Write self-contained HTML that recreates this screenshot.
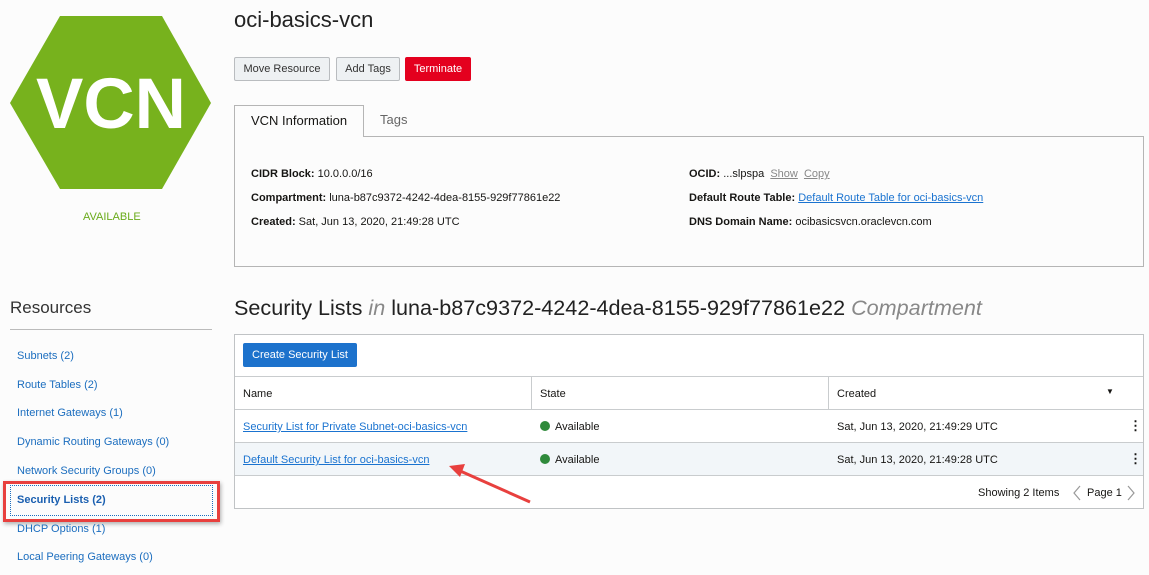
<!DOCTYPE html>
<html><head><style>
*{margin:0;padding:0;box-sizing:border-box}
body{width:1149px;height:575px;background:#fcfcfc;font-family:"Liberation Sans",sans-serif;color:#161513;position:relative;overflow:hidden}
.a{position:absolute}
.btn{position:absolute;top:57px;height:24px;border:1px solid #b9bcbf;background:#eef1f3;border-radius:2px;font-size:11px;line-height:23px;text-align:center;color:#333}
.d{position:absolute;font-size:11px;white-space:nowrap}
.d b{font-weight:bold}
.side{position:absolute;left:17px;font-size:11px;color:#1c6ebf}
.link{color:#1a73d0;text-decoration:underline}
.cell{position:absolute;font-size:11px;white-space:nowrap}
.hl{position:absolute;left:235px;width:908px;height:1px;background:#c9ccce}
.dot{display:inline-block;width:10px;height:10px;border-radius:50%;background:#2f8a3b;vertical-align:-1px;margin-right:5px}
</style></head><body>
<svg class="a" style="left:0;top:0" width="225" height="200">
<polygon points="10,103 60,16 162,16 211,103 162,189 60,189" fill="#77b21d"/>
<text x="111" y="128" text-anchor="middle" font-family="Liberation Sans" font-weight="bold" font-size="71" fill="#fff">VCN</text>
</svg>
<div class="a" style="left:83px;top:211px;font-size:11px;color:#6aab1a">AVAILABLE</div>
<div class="a" style="left:234px;top:7px;font-size:22px;color:#222">oci-basics-vcn</div>
<div class="btn" style="left:234px;width:96px">Move Resource</div>
<div class="btn" style="left:336px;width:64px">Add Tags</div>
<div class="btn" style="left:405px;width:66px;background:#e4001e;border-color:#e4001e;color:#fff">Terminate</div>
<div class="a" style="left:234px;top:136px;width:910px;height:131px;border:1px solid #b5b5b5;background:#fcfcfc"></div>
<div class="a" style="left:234px;top:105px;width:130px;height:32px;border:1px solid #b5b5b5;border-bottom:none;background:#fcfcfc;font-size:13px;line-height:30px;text-align:center">VCN Information</div>
<div class="a" style="left:380px;top:112px;font-size:13px;color:#666">Tags</div>
<div class="d" style="left:251px;top:168px"><b>CIDR Block:</b> 10.0.0.0/16</div>
<div class="d" style="left:251px;top:192px"><b>Compartment:</b> luna-b87c9372-4242-4dea-8155-929f77861e22</div>
<div class="d" style="left:251px;top:216px"><b>Created:</b> Sat, Jun 13, 2020, 21:49:28 UTC</div>
<div class="d" style="left:689px;top:168px"><b>OCID:</b> ...slpspa &nbsp;<span style="color:#888;text-decoration:underline">Show</span> &nbsp;<span style="color:#888;text-decoration:underline">Copy</span></div>
<div class="d" style="left:689px;top:192px"><b>Default Route Table:</b> <span class="link">Default Route Table for oci-basics-vcn</span></div>
<div class="d" style="left:689px;top:216px"><b>DNS Domain Name:</b> ocibasicsvcn.oraclevcn.com</div>
<div class="a" style="left:234px;top:295px;font-size:21.6px;white-space:nowrap;color:#222">Security Lists <i style="color:#888">in</i> luna-b87c9372-4242-4dea-8155-929f77861e22 <i style="color:#888">Compartment</i></div>
<div class="a" style="left:10px;top:298px;font-size:17px;color:#333">Resources</div>
<div class="a" style="left:10px;top:329px;width:202px;height:1px;background:#bbb"></div>
<div class="side" style="top:350px">Subnets (2)</div>
<div class="side" style="top:379px">Route Tables (2)</div>
<div class="side" style="top:407px">Internet Gateways (1)</div>
<div class="side" style="top:436px">Dynamic Routing Gateways (0)</div>
<div class="side" style="top:465px">Network Security Groups (0)</div>
<div class="a" style="left:3px;top:481px;width:217px;height:41px;border:3px solid #e8403e;box-shadow:1px 2px 4px rgba(0,0,0,.3)"></div>
<div class="a" style="left:10px;top:485px;width:203px;height:31px;border:1px dotted #1c6ebf"></div>
<div class="side" style="top:494px;font-weight:bold;color:#1a5fb0">Security Lists (2)</div>
<div class="side" style="top:523px">DHCP Options (1)</div>
<div class="side" style="top:551px">Local Peering Gateways (0)</div>
<div class="a" style="left:234px;top:334px;width:910px;height:175px;border:1px solid #c0c3c5;background:#fff"></div>
<div class="a" style="left:243px;top:343px;width:114px;height:24px;background:#1d72cc;border-radius:2px;color:#fff;font-size:11px;line-height:24px;text-align:center">Create Security List</div>
<div class="hl" style="top:376px"></div>
<div class="hl" style="top:409px"></div>
<div class="a" style="left:235px;top:443px;width:908px;height:32px;background:#f2f6f9"></div>
<div class="hl" style="top:442px"></div>
<div class="hl" style="top:475px"></div>
<div class="a" style="left:531px;top:377px;width:1px;height:32px;background:#c9ccce"></div>
<div class="a" style="left:828px;top:377px;width:1px;height:32px;background:#c9ccce"></div>
<div class="cell" style="left:243px;top:388px">Name</div>
<div class="cell" style="left:540px;top:388px">State</div>
<div class="cell" style="left:837px;top:388px">Created</div>
<div class="cell" style="left:1106px;top:387px;font-size:8px">▼</div>
<div class="cell link" style="left:243px;top:421px">Security List for Private Subnet-oci-basics-vcn</div>
<div class="cell" style="left:540px;top:421px"><span class="dot"></span>Available</div>
<div class="cell" style="left:837px;top:421px">Sat, Jun 13, 2020, 21:49:29 UTC</div>
<div class="cell" style="left:1129px;top:418px;font-weight:bold;font-size:13px">⋮</div>
<div class="cell link" style="left:243px;top:454px">Default Security List for oci-basics-vcn</div>
<div class="cell" style="left:540px;top:454px"><span class="dot"></span>Available</div>
<div class="cell" style="left:837px;top:454px">Sat, Jun 13, 2020, 21:49:28 UTC</div>
<div class="cell" style="left:1129px;top:451px;font-weight:bold;font-size:13px">⋮</div>
<div class="cell" style="left:978px;top:487px">Showing 2 Items</div>
<div class="cell" style="left:1087px;top:487px">Page 1</div>
<svg class="a" style="left:1070px;top:484px" width="70" height="18"><path d="M10 2 L4 9 L10 16" fill="none" stroke="#999" stroke-width="1.2"/><path d="M58 2 L64 9 L58 16" fill="none" stroke="#999" stroke-width="1.2"/></svg>
<svg class="a" style="left:440px;top:455px" width="100" height="55"><line x1="90" y1="47" x2="18" y2="15" stroke="#e8403e" stroke-width="3"/><polygon points="9,11 25,9 20,22" fill="#e8403e"/></svg>
</body></html>
